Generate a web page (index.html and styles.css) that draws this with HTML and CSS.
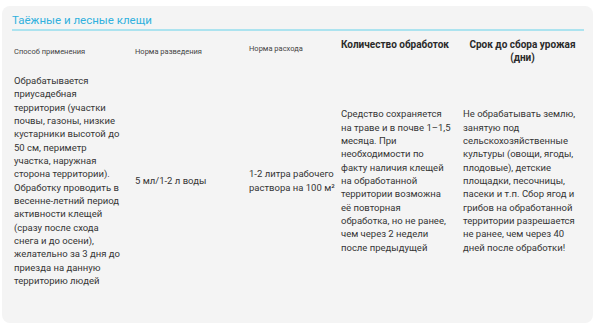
FILE: index.html
```html
<!DOCTYPE html>
<html lang="ru">
<head>
<meta charset="utf-8">
<link rel="stylesheet" href="styles.css">
</head>
<body>
<div class="card">
  <h3 class="title">Таёжные и лесные клещи</h3>
  <table class="tbl">
    <colgroup>
      <col class="c1"><col class="c2"><col class="c3"><col class="c4"><col class="c5">
    </colgroup>
    <thead>
      <tr>
        <th class="sm">Способ применения</th>
        <th class="sm">Норма разведения</th>
        <th class="sm sm-up">Норма расхода</th>
        <th class="bd">Количество обработок</th>
        <th class="bd center">Срок до сбора урожая (дни)</th>
      </tr>
    </thead>
    <tbody>
      <tr>
        <td class="d1">Обрабатывается приусадебная территория (участки почвы, газоны, низкие кустарники высотой до 50 см, периметр участка, наружная сторона территории). Обработку проводить в весенне-летний период активности клещей (сразу после схода снега и до осени), желательно за 3 дня до приезда на данную территорию людей</td>
        <td class="d2">5 мл/1-2 л воды</td>
        <td class="d3">1-2 литра рабочего раствора на 100&nbsp;м²</td>
        <td class="d4">Средство сохраняется<br>на траве и в почве 1–1,5<br>месяца. При<br>необходимости по<br>факту наличия клещей<br>на обработанной<br>территории возможна<br>её повторная<br>обработка, но не ранее,<br>чем через 2 недели<br>после предыдущей</td>
        <td class="d5">Не обрабатывать землю, занятую под сельскохозяйственные культуры (овощи, ягоды, плодовые), детские площадки, песочницы, пасеки и т.п. Сбор ягод и грибов на обработанной территории разрешается не ранее, чем через 40 дней после обработки!</td>
      </tr>
    </tbody>
  </table>
</div>
</body>
</html>
```
FILE: styles.css
```css
html, body {
  margin: 0;
  padding: 0;
  background: #ffffff;
}
body {
  font-family: Roboto, "Liberation Sans", sans-serif;
  color: #333333;
}
.card {
  margin: 6px 7px 0 2px;
  height: 317px;
  box-sizing: border-box;
  background: #f4f4f4;
  border-radius: 8px;
  padding: 7px 9px 0 10px;
}
.title {
  margin: 0;
  font-size: 11.5px;
  font-weight: 400;
  color: #31b1de;
  line-height: 14px;
  padding-bottom: 2px;
  border-bottom: 2px solid #ace3ef;
}
.tbl {
  width: 100%;
  border-collapse: collapse;
  table-layout: fixed;
}
.c1 { width: 121px; }
.c2 { width: 114px; }
.c3 { width: 92px; }
.c4 { width: 122px; }
.c5 { width: 123px; }
.tbl th, .tbl td {
  padding: 0 8px 0 2px;
  text-align: left;
}
.tbl th {
  vertical-align: top;
}
.tbl th.sm {
  font-size: 7.5px;
  font-weight: 400;
  line-height: 9px;
  color: #444444;
  padding-top: 16px;
}
.tbl th.sm-up {
  padding-top: 13px;
}
.tbl th.bd {
  font-size: 10px;
  font-weight: 700;
  color: #2a2a2a;
  line-height: 13px;
  padding-top: 7px;
}
.tbl th.center {
  text-align: center;
  padding-right: 2px;
}
.tbl td {
  font-size: 9.5px;
  line-height: 13.35px;
  vertical-align: middle;
  padding-top: 10px;
  color: #353535;
}
.tbl td.d3 { padding-right: 3px; }
.tbl td.d4 { padding-right: 5px; }
.tbl td.d5 { padding-right: 6px; }
```
